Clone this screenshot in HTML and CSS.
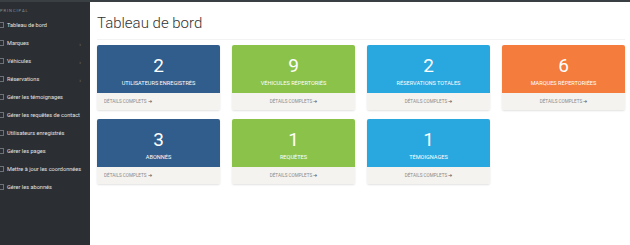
FILE: index.html
```html
<!DOCTYPE html>
<html lang="fr">
<head>
  <meta charset="UTF-8">
  <title>Tableau de bord</title>
  <link rel="stylesheet" href="styles.css">
</head>
<body>

<div class="layout">
  <nav class="sidebar">
    <div class="side-heading">Principal</div>
    <ul class="menu">
      <li><span class="ico"></span>Tableau de bord</li>
      <li><span class="ico"></span>Marques<span class="chev">&rsaquo;</span></li>
      <li><span class="ico"></span>Véhicules<span class="chev">&rsaquo;</span></li>
      <li><span class="ico"></span>Réservations<span class="chev">&rsaquo;</span></li>
      <li><span class="ico"></span>Gérer les témoignages</li>
      <li><span class="ico"></span>Gérer les requêtes de contact</li>
      <li><span class="ico"></span>Utilisateurs enregistrés</li>
      <li><span class="ico"></span>Gérer les pages</li>
      <li><span class="ico"></span>Mettre à jour les coordonnées</li>
      <li><span class="ico"></span>Gérer les abonnés</li>
    </ul>
  </nav>

  <main class="content">
    <h1 class="page-title">Tableau de bord</h1>

    <div class="cards">
      <div class="card">
        <div class="card-body blue">
          <div class="count">2</div>
          <div class="label">Utilisateurs enregistrés</div>
        </div>
        <div class="card-foot left">Détails complets <span class="arrow">&#10140;</span></div>
      </div>
      <div class="card">
        <div class="card-body green">
          <div class="count">9</div>
          <div class="label">Véhicules répertoriés</div>
        </div>
        <div class="card-foot">Détails complets <span class="arrow">&#10140;</span></div>
      </div>
      <div class="card">
        <div class="card-body sky">
          <div class="count">2</div>
          <div class="label">Réservations totales</div>
        </div>
        <div class="card-foot">Détails complets <span class="arrow">&#10140;</span></div>
      </div>
      <div class="card">
        <div class="card-body orange">
          <div class="count">6</div>
          <div class="label">Marques répertoriées</div>
        </div>
        <div class="card-foot">Détails complets <span class="arrow">&#10140;</span></div>
      </div>

      <div class="card">
        <div class="card-body blue">
          <div class="count">3</div>
          <div class="label">Abonnés</div>
        </div>
        <div class="card-foot left">Détails complets <span class="arrow">&#10140;</span></div>
      </div>
      <div class="card">
        <div class="card-body green">
          <div class="count">1</div>
          <div class="label">Requêtes</div>
        </div>
        <div class="card-foot">Détails complets <span class="arrow">&#10140;</span></div>
      </div>
      <div class="card">
        <div class="card-body sky">
          <div class="count">1</div>
          <div class="label">Témoignages</div>
        </div>
        <div class="card-foot">Détails complets <span class="arrow">&#10140;</span></div>
      </div>
    </div>
  </main>
</div>

</body>
</html>
```

FILE: styles.css
```css
body {
  margin: 0;
  padding: 0;
  font-family: Roboto, "Liberation Sans", Arial, sans-serif;
  background: #ffffff;
  color: #333;
}

.layout {
  display: flex;
  height: 245px;
  border-top: 2px solid #3a3f44;
  box-sizing: border-box;
}

.sidebar {
  width: 90px;
  flex-shrink: 0;
  background: #2b2f33;
  color: #e2e2e2;
  overflow: hidden;
}

.side-heading {
  font-size: 4px;
  letter-spacing: 1px;
  text-transform: uppercase;
  color: #8b8f94;
  padding: 6px 0 0 0;
  height: 8px;
}

.menu {
  list-style: none;
  margin: 0;
  padding: 0;
}

.menu li {
  display: flex;
  align-items: center;
  height: 18px;
  font-size: 5.6px;
  white-space: nowrap;
}

.ico {
  width: 3px;
  height: 4px;
  border: 1px solid #9aa0a6;
  border-left: none;
  margin-right: 3px;
  opacity: 0.6;
}

.chev {
  margin-left: auto;
  margin-right: 9px;
  color: #777;
  font-size: 6px;
}

.content {
  flex: 1;
  padding: 0 5px 0 7px;
}

.page-title {
  font-size: 15px;
  font-weight: 300;
  color: #333;
  margin: 0;
  padding: 12px 0 7px 0;
  border-bottom: 1px solid #f3f3f3;
}

.cards {
  display: grid;
  grid-template-columns: repeat(4, 123px);
  column-gap: 12px;
  row-gap: 9px;
  margin-top: 5px;
}

.card {
  box-shadow: 0 1px 2px rgba(0, 0, 0, 0.12);
  border-radius: 2px;
  overflow: hidden;
}

.card-body {
  height: 48px;
  color: #fff;
  text-align: center;
  box-sizing: border-box;
  padding-top: 10px;
}

.count {
  font-size: 19px;
  line-height: 22px;
}

.label {
  font-size: 5.6px;
  text-transform: uppercase;
  margin-top: 3px;
}

.blue { background: #305d8c; }
.green { background: #8bc34a; }
.sky { background: #29a7df; }
.orange { background: #f47c3c; }

.card-foot {
  height: 17px;
  line-height: 17px;
  background: #f5f3ef;
  font-size: 4.6px;
  text-transform: uppercase;
  color: #8a8a8a;
  text-align: center;
}

.card-foot.left {
  text-align: left;
  padding-left: 7px;
}

.arrow {
  font-size: 5px;
  color: #666;
}
```
